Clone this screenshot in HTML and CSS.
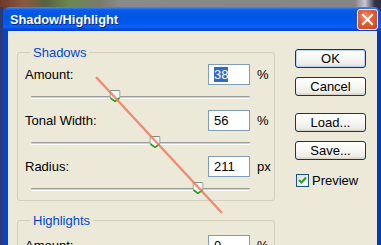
FILE: index.html
```html
<!DOCTYPE html>
<html>
<head>
<meta charset="utf-8">
<link rel="stylesheet" href="styles.css">
</head>
<body>
<div class="desktop">
  <div class="window">
    <div class="titlebar">
      <span class="title">Shadow/Highlight</span>
      <span class="close"><svg width="13" height="13" viewBox="0 0 13 13"><path d="M2 2 L11 11 M11 2 L2 11" stroke="#fff" stroke-width="2.2" stroke-linecap="square"/></svg></span>
    </div>
    <div class="body">
      <div class="main">
        <fieldset class="group">
          <legend>Shadows</legend>
          <div class="row">
            <span class="label">Amount:</span>
            <span class="input"><span class="sel">38</span></span>
            <span class="unit">%</span>
          </div>
          <div class="slider"><div class="track"><span class="thumb" style="left:84px"><svg width="11" height="12" viewBox="0 0 11 12"><path d="M1.5 0.5 H9.5 Q10.5 0.5 10.5 1.5 V7.5 L5.5 11.5 L0.5 7.5 V1.5 Q0.5 0.5 1.5 0.5 Z" fill="#f7f7f3" stroke="#7f8f7f"/><path d="M1 8 L5.5 11.3 L10 8" fill="none" stroke="#1f9f1f" stroke-width="1.6"/></svg></span></div></div>
          <div class="row">
            <span class="label">Tonal Width:</span>
            <span class="input">56</span>
            <span class="unit">%</span>
          </div>
          <div class="slider"><div class="track"><span class="thumb" style="left:124px"><svg width="11" height="12" viewBox="0 0 11 12"><path d="M1.5 0.5 H9.5 Q10.5 0.5 10.5 1.5 V7.5 L5.5 11.5 L0.5 7.5 V1.5 Q0.5 0.5 1.5 0.5 Z" fill="#f7f7f3" stroke="#7f8f7f"/><path d="M1 8 L5.5 11.3 L10 8" fill="none" stroke="#1f9f1f" stroke-width="1.6"/></svg></span></div></div>
          <div class="row">
            <span class="label">Radius:</span>
            <span class="input">211</span>
            <span class="unit">px</span>
          </div>
          <div class="slider last"><div class="track"><span class="thumb" style="left:167px"><svg width="11" height="12" viewBox="0 0 11 12"><path d="M1.5 0.5 H9.5 Q10.5 0.5 10.5 1.5 V7.5 L5.5 11.5 L0.5 7.5 V1.5 Q0.5 0.5 1.5 0.5 Z" fill="#f7f7f3" stroke="#7f8f7f"/><path d="M1 8 L5.5 11.3 L10 8" fill="none" stroke="#1f9f1f" stroke-width="1.6"/></svg></span></div></div>
        </fieldset>
        <fieldset class="group">
          <legend>Highlights</legend>
          <div class="row hl">
            <span class="label">Amount:</span>
            <span class="input">0</span>
            <span class="unit">%</span>
          </div>
        </fieldset>
      </div>
      <div class="side">
        <button class="btn default">OK</button>
        <button class="btn">Cancel</button>
        <button class="btn gap">Load...</button>
        <button class="btn">Save...</button>
        <label class="check"><span class="box"><svg width="9" height="9" viewBox="0 0 9 9"><path d="M1 4 L3.5 6.5 L8 1.5" fill="none" stroke="#21A121" stroke-width="2"/></svg></span>Preview</label>
      </div>
    </div>
    <svg class="annot" width="381" height="245" viewBox="0 0 381 245"><line x1="96" y1="77" x2="222" y2="213" stroke="#F07A62" stroke-opacity="0.85" stroke-width="2.4"/></svg>
  </div>
</div>
</body>
</html>
```

FILE: styles.css
```css
* { box-sizing: border-box; }
html, body { margin: 0; padding: 0; }
body {
  width: 381px;
  height: 245px;
  overflow: hidden;
  font-family: "Liberation Sans", Arial, sans-serif;
  font-size: 13px;
  color: #000;
}
.desktop {
  width: 381px;
  height: 245px;
  padding: 7px 0 0 3px;
  background:
    linear-gradient(to bottom, transparent 0, transparent 7px, #2a3a78 7px) 0 0 / 3px 245px no-repeat,
    linear-gradient(to right, #6b3a2a 0, #8a5a40 25px, #5a6040 45px, #6a8a50 70px, #7a7a6a 100px, #8a8a8a 120px, #858585 355px, #c8c8d8 365px, #303040 375px);
  position: relative;
}
.window {
  width: 378px;
  height: 238px;
  display: flex;
  flex-direction: column;
  overflow: hidden;
}
.titlebar {
  height: 24px;
  flex: none;
  border-radius: 7px 7px 0 0;
  background: linear-gradient(to bottom, #3c8cfc 0, #0a5ae8 3px, #0055e5 9px, #0058ee 16px, #0d62f2 20px, #0048d8 22px, #0040d0 24px);
  display: flex;
  align-items: center;
  justify-content: space-between;
  padding: 0 3px 0 7px;
}
.title {
  color: #fff;
  font-weight: bold;
  font-size: 12.8px;
  text-shadow: 1px 1px 0 #0a2a8a;
  padding-top: 1px;
}
.close {
  width: 21px;
  height: 21px;
  border: 1px solid #fff;
  border-radius: 3px;
  background: radial-gradient(circle at 40% 35%, #f29070 0, #e25a32 45%, #cc421c 100%);
  display: flex;
  align-items: center;
  justify-content: center;
}
.body {
  flex: 1;
  background: #ECE9D8;
  border-left: 5px solid #0842cc;
  border-right: 4px solid #0838b8;
  display: flex;
  padding: 0 0 0 9px;
  min-height: 0;
}
.main {
  width: 258px;
  flex: none;
}
.group {
  margin: 14px 0 0 0;
  border: 1px solid #D0D0BF;
  border-radius: 3px;
  padding: 0 0 0 7px;
  min-width: 0;
}
.group + .group { margin-top: 12px; }
.group legend {
  color: #0046D5;
  padding: 0 3px;
  margin-left: 5px;
  font-size: 13px;
}
.row {
  display: flex;
  align-items: center;
  height: 21px;
  margin-top: 4px;
}
.row.hl { margin-top: 7px; }
.slider + .row { margin-top: 0; }
.label { flex: 1; }
.input {
  width: 42px;
  height: 21px;
  border: 1px solid #7F9DB9;
  background: #fff;
  padding: 0 0 0 5px;
  display: flex;
  align-items: center;
  line-height: 15px;
}
.sel {
  background: #316AC5;
  color: #fff;
}
.unit {
  width: 17px;
  margin-left: 7px;
}
.slider {
  height: 25px;
  padding: 11px 0 0 6px;
}
.slider.last { height: 23px; }
.track {
  position: relative;
  width: 219px;
  height: 3px;
  border-top: 1px solid #9d9c99;
  border-bottom: 1px solid #fff;
  background: #d6d3c4;
  border-radius: 1px;
}
.thumb {
  position: absolute;
  top: -7px;
  width: 11px;
  height: 12px;
  display: block;
  transform: translateX(-50%);
}
.thumb svg { display: block; }
.side {
  width: 71px;
  margin-left: 20px;
  padding-top: 18px;
  display: flex;
  flex-direction: column;
}
.btn {
  width: 71px;
  height: 19px;
  margin: 0 0 9px 0;
  padding: 0;
  border: 1px solid #003C74;
  border-radius: 3px;
  background: linear-gradient(to bottom, #ffffff 0, #f6f6f2 50%, #ecebe6 85%, #d6d0c5 100%);
  font-family: "Liberation Sans", Arial, sans-serif;
  font-size: 13px;
  color: #000;
}
.btn.default { box-shadow: inset 0 0 0 1px #bcd4f6; }
.btn.gap { margin-top: 8px; }
.check {
  display: flex;
  align-items: center;
  margin-top: 4px;
  height: 14px;
}
.box {
  width: 13px;
  height: 13px;
  border: 1px solid #1C5180;
  background: linear-gradient(135deg, #dcdcd6 0, #fff 100%);
  margin: 0 3px 0 1px;
  display: flex;
  align-items: center;
  justify-content: center;
}
.annot {
  position: absolute;
  left: 0;
  top: 0;
  pointer-events: none;
}
```
